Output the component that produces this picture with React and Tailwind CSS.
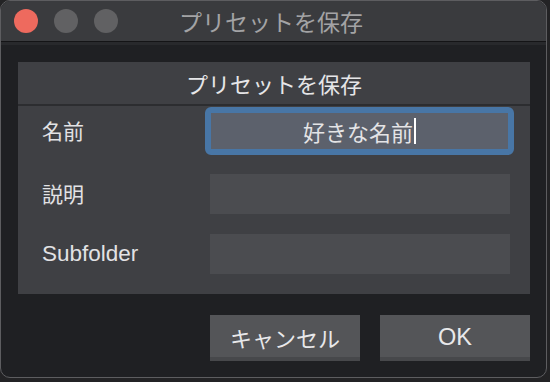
import React from 'react';

const jp = '"Noto Sans CJK JP", "Liberation Sans", sans-serif';
const latin = '"Liberation Sans", "Noto Sans CJK JP", sans-serif';

function TrafficLight({ color }) {
  return <span className={`block h-[24px] w-[24px] rounded-full ${color}`} />;
}

function FieldRow({ label, latinLabel, children, className = '' }) {
  return (
    <div className={`flex items-center ${className}`}>
      <div
        className={`w-[192px] pl-[24px] text-[#e2e2e4] ${latinLabel ? 'text-[22.5px]' : 'text-[21px]'}`}
        style={{ fontFamily: latinLabel ? latin : jp }}
      >
        {label}
      </div>
      {children}
    </div>
  );
}

export default function App() {
  return (
    <div className="h-[382px] w-[550px] overflow-hidden bg-[#232325]">
      <div className="flex h-[378px] w-[547px] flex-col overflow-hidden rounded-[10px] border border-[#5d5d60] bg-[#1f2023]">
        {/* title bar */}
        <div className="relative flex h-[41px] shrink-0 items-center border-b border-[#141416] bg-[#3a3b3e]">
          <div className="flex items-center gap-[16px] pl-[13px]">
            <TrafficLight color="bg-[#ee6a5e]" />
            <TrafficLight color="bg-[#616163]" />
            <TrafficLight color="bg-[#616163]" />
          </div>
          <div
            className="ml-[61px] text-[23px] leading-none text-[#a3a3a5]"
            style={{ fontFamily: jp }}
          >
            プリセットを保存
          </div>
        </div>
        <div className="h-[3px] shrink-0 bg-[#28292c]" />

        {/* content */}
        <div className="flex flex-1 flex-col px-[17px] pt-[17px]">
          <div className="flex h-[232px] w-[512px] flex-col bg-[#3f4044]">
            <div
              className="flex h-[44px] shrink-0 items-center justify-center border-b-2 border-[#2c2d30] text-[22px] text-[#e6e6e8]"
              style={{ fontFamily: jp }}
            >
              プリセットを保存
            </div>
            <FieldRow label="名前" className="mt-[1px] h-[48px]">
              <div className="ml-[-5px] flex h-[48px] w-[309px] items-center justify-center rounded-[6px] border-[6px] border-[#4876a6] bg-[#5c616c]">
                <span
                  className="text-[22px] text-[#e4e4e6]"
                  style={{ fontFamily: jp }}
                >
                  好きな名前
                </span>
                <span className="ml-[1px] h-[26px] w-[2px] bg-white" />
              </div>
            </FieldRow>
            <FieldRow label="説明" className="mt-[19px] h-[40px]">
              <div className="h-[40px] w-[300px] bg-[#4b4c50]" />
            </FieldRow>
            <FieldRow label="Subfolder" latinLabel className="mt-[20px] h-[40px]">
              <div className="h-[40px] w-[300px] bg-[#4b4c50]" />
            </FieldRow>
          </div>

          <div className="mt-[21px] flex w-[512px] justify-end gap-[20px]">
            <button
              type="button"
              className="flex h-[46px] w-[150px] items-center justify-center border-b-[4px] border-[#47484b] bg-[#545558] pt-[3px] text-[22px] text-[#e8e8ea]"
              style={{ fontFamily: jp }}
            >
              キャンセル
            </button>
            <button
              type="button"
              className="flex h-[46px] w-[150px] items-center justify-center border-b-[4px] border-[#47484b] bg-[#545558] pt-[3px] text-[23.5px] text-[#e8e8ea]"
              style={{ fontFamily: latin }}
            >
              OK
            </button>
          </div>
        </div>
      </div>
    </div>
  );
}
